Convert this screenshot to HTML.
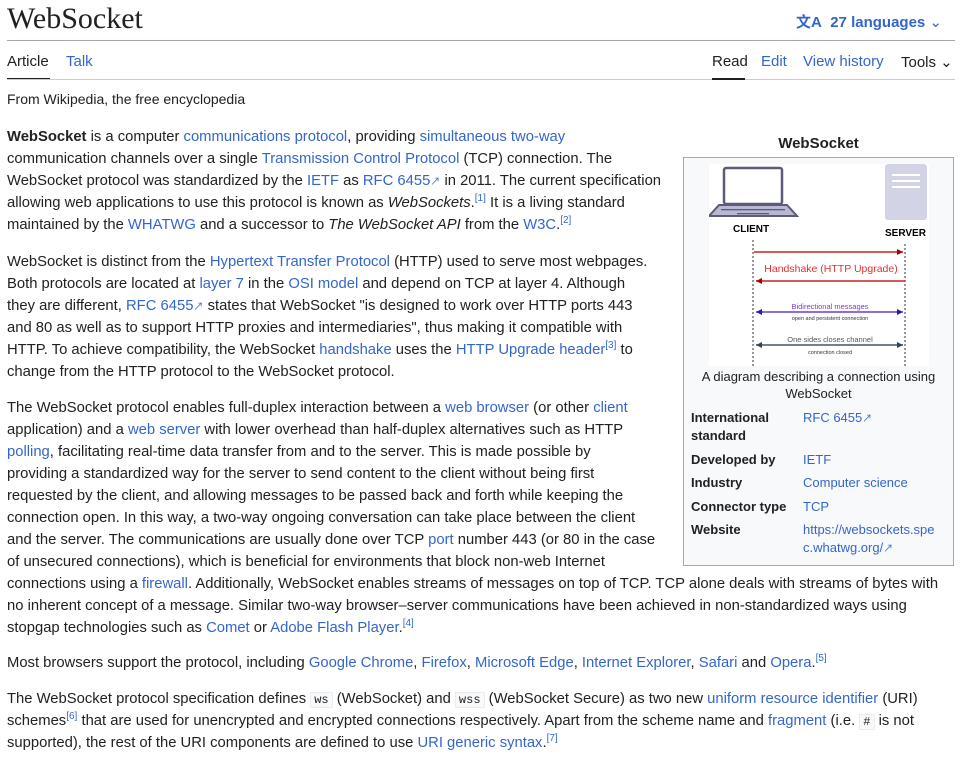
<!DOCTYPE html>
<html><head><meta charset="utf-8"><style>
body{margin:0;width:964px;height:769px;overflow:hidden;background:#fff;font-family:"Liberation Sans","Noto Sans CJK SC",sans-serif;color:#202122;font-size:14px}
a{color:#3366cc;text-decoration:none}
.l{position:absolute;left:7px;white-space:nowrap;line-height:22px;height:22px;font-size:14.8px}
sup{font-size:10px;line-height:0}
code{font-family:"Liberation Mono",monospace;background:#f8f9fa;border:1px solid #eaecf0;padding:0 3px;font-size:12px}
.ib{position:absolute;left:683px;top:157px;width:271px;height:409px;border:1px solid #a2a9b1;background:#f8f9fa;box-sizing:border-box}
.ir{position:absolute;font-size:13px;line-height:18px;white-space:nowrap}
.ext{font-size:10px}
</style></head><body>
<div style="position:absolute;left:7px;top:1px;font-family:'Liberation Serif',serif;font-size:30px;line-height:36px">WebSocket</div>
<div style="position:absolute;right:22px;top:11px;color:#3366cc;font-weight:bold;font-size:15px">文A&nbsp; 27 languages <span style="font-weight:normal">⌄</span></div>
<div style="position:absolute;left:7px;top:40px;width:948px;height:1px;background:#a2a9b1"></div>
<div style="position:absolute;left:7px;top:53px;font-size:15px">Article</div>
<div style="position:absolute;left:66px;top:53px;font-size:15px;color:#3366cc">Talk</div>
<div style="position:absolute;left:7px;top:78px;width:43px;height:2px;background:#202122"></div>
<div style="position:absolute;left:7px;top:79px;width:948px;height:1px;background:#c8ccd1"></div>
<div style="position:absolute;left:712px;top:53px;font-size:15px">Read</div>
<div style="position:absolute;left:712px;top:78px;width:33px;height:2px;background:#202122"></div>
<div style="position:absolute;left:761px;top:53px;color:#3366cc;font-size:15px">Edit</div>
<div style="position:absolute;left:803px;top:53px;color:#3366cc;font-size:15px">View history</div>
<div style="position:absolute;left:901px;top:53px;font-size:15px">Tools ⌄</div>
<div style="position:absolute;left:7px;top:91px;font-size:14px">From Wikipedia, the free encyclopedia</div>

<div class="l" style="top:126px"><b>WebSocket</b> is a computer <a>communications protocol</a>, providing <a>simultaneous two-way</a></div>
<div class="l" style="top:148px">communication channels over a single <a>Transmission Control Protocol</a> (TCP) connection. The</div>
<div class="l" style="top:170px">WebSocket protocol was standardized by the <a>IETF</a> as <a>RFC 6455<span class="ext">↗</span></a> in 2011. The current specification</div>
<div class="l" style="top:192px">allowing web applications to use this protocol is known as <i>WebSockets</i>.<sup><a>[1]</a></sup> It is a living standard</div>
<div class="l" style="top:214px">maintained by the <a>WHATWG</a> and a successor to <i>The WebSocket API</i> from the <a>W3C</a>.<sup><a>[2]</a></sup></div>

<div class="l" style="top:251px">WebSocket is distinct from the <a>Hypertext Transfer Protocol</a> (HTTP) used to serve most webpages.</div>
<div class="l" style="top:273px">Both protocols are located at <a>layer 7</a> in the <a>OSI model</a> and depend on TCP at layer 4. Although</div>
<div class="l" style="top:295px">they are different, <a>RFC 6455<span class="ext">↗</span></a> states that WebSocket "is designed to work over HTTP ports 443</div>
<div class="l" style="top:317px">and 80 as well as to support HTTP proxies and intermediaries", thus making it compatible with</div>
<div class="l" style="top:339px">HTTP. To achieve compatibility, the WebSocket <a>handshake</a> uses the <a>HTTP Upgrade header</a><sup><a>[3]</a></sup> to</div>
<div class="l" style="top:361px">change from the HTTP protocol to the WebSocket protocol.</div>

<div class="l" style="top:397px">The WebSocket protocol enables full-duplex interaction between a <a>web browser</a> (or other <a>client</a></div>
<div class="l" style="top:419px">application) and a <a>web server</a> with lower overhead than half-duplex alternatives such as HTTP</div>
<div class="l" style="top:441px"><a>polling</a>, facilitating real-time data transfer from and to the server. This is made possible by</div>
<div class="l" style="top:463px">providing a standardized way for the server to send content to the client without being first</div>
<div class="l" style="top:485px">requested by the client, and allowing messages to be passed back and forth while keeping the</div>
<div class="l" style="top:507px">connection open. In this way, a two-way ongoing conversation can take place between the client</div>
<div class="l" style="top:529px">and the server. The communications are usually done over TCP <a>port</a> number 443 (or 80 in the case</div>
<div class="l" style="top:551px">of unsecured connections), which is beneficial for environments that block non-web Internet</div>
<div class="l" style="top:573px">connections using a <a>firewall</a>. Additionally, WebSocket enables streams of messages on top of TCP. TCP alone deals with streams of bytes with</div>
<div class="l" style="top:595px">no inherent concept of a message. Similar two-way browser–server communications have been achieved in non-standardized ways using</div>
<div class="l" style="top:617px">stopgap technologies such as <a>Comet</a> or <a>Adobe Flash Player</a>.<sup><a>[4]</a></sup></div>

<div class="l" style="top:652px">Most browsers support the protocol, including <a>Google Chrome</a>, <a>Firefox</a>, <a>Microsoft Edge</a>, <a>Internet Explorer</a>, <a>Safari</a> and <a>Opera</a>.<sup><a>[5]</a></sup></div>

<div class="l" style="top:688px">The WebSocket protocol specification defines <code>ws</code> (WebSocket) and <code>wss</code> (WebSocket Secure) as two new <a>uniform resource identifier</a> (URI)</div>
<div class="l" style="top:710px">schemes<sup><a>[6]</a></sup> that are used for unencrypted and encrypted connections respectively. Apart from the scheme name and <a>fragment</a> (i.e. <code>#</code> is not</div>
<div class="l" style="top:732px">supported), the rest of the URI components are defined to use <a>URI generic syntax</a>.<sup><a>[7]</a></sup></div>

<div style="position:absolute;left:683px;top:135px;width:271px;text-align:center;font-weight:bold;font-size:15px">WebSocket</div>
<div class="ib"></div>
<svg style="position:absolute;left:709px;top:164px" width="220" height="202" viewBox="0 0 220 202">
<rect width="220" height="202" fill="#fff"/>
<rect x="15" y="4" width="58" height="36" rx="2" fill="#fff" stroke="#5d5a78" stroke-width="2.5"/>
<path d="M0 52 L10 41 L78 41 L88 52 Z" fill="#b9b8d4" stroke="#5d5a78" stroke-width="2"/>
<rect x="12" y="45" width="64" height="1.3" fill="#5d5a78"/><rect x="28" y="49" width="32" height="1.3" fill="#5d5a78"/>
<rect x="176" y="0" width="42" height="56" rx="3" fill="#d3d3e6"/>
<rect x="183" y="10" width="28" height="2" fill="#fff"/><rect x="183" y="16" width="28" height="2" fill="#fff"/><rect x="183" y="22" width="28" height="2" fill="#fff"/>
<text x="24" y="68" font-family="Liberation Sans" font-weight="bold" font-size="10">CLIENT</text>
<text x="176" y="72" font-family="Liberation Sans" font-weight="bold" font-size="10">SERVER</text>
<line x1="44" y1="76" x2="44" y2="202" stroke="#333" stroke-dasharray="2,2"/>
<line x1="196" y1="80" x2="196" y2="202" stroke="#333" stroke-dasharray="2,2"/>
<path d="M45 88 H194" stroke="#c22" stroke-width="1.5"/><path d="M194 88 l-6 -3 v6z" fill="#a00"/>
<text x="122" y="108" text-anchor="middle" font-family="Liberation Sans" font-size="10.5" fill="#d33">Handshake (HTTP Upgrade)</text>
<path d="M47 117 H196" stroke="#c22" stroke-width="1.5"/><path d="M47 117 l6 -3 v6z" fill="#a00"/>
<text x="121" y="145" text-anchor="middle" font-family="Liberation Sans" font-size="7.5" fill="#7a3fc2">Bidirectional messages</text>
<path d="M47 148 H194" stroke="#6a3fd1" stroke-width="1.5"/><path d="M194 148 l-6 -3 v6z M47 148 l6 -3 v6z" fill="#2a1aa8"/>
<text x="121" y="156" text-anchor="middle" font-family="Liberation Sans" font-size="5.5" fill="#333">open and persistent connection</text>
<text x="121" y="178" text-anchor="middle" font-family="Liberation Sans" font-size="7.5" fill="#555">One sides closes channel</text>
<path d="M47 181 H194" stroke="#456" stroke-width="1.5"/><path d="M194 181 l-6 -3 v6z M47 181 l6 -3 v6z" fill="#345"/>
<text x="121" y="190" text-anchor="middle" font-family="Liberation Sans" font-size="5.5" fill="#333">connection closed</text>
</svg>
<div style="position:absolute;left:684px;top:368px;width:269px;text-align:center;font-size:13px;line-height:17px">A diagram describing a connection using WebSocket</div>
<div class="ir" style="left:691px;top:409px;font-weight:bold">International<br>standard</div>
<div class="ir" style="left:803px;top:409px"><a>RFC 6455<span class="ext">↗</span></a></div>
<div class="ir" style="left:691px;top:451px;font-weight:bold">Developed by</div>
<div class="ir" style="left:803px;top:451px"><a>IETF</a></div>
<div class="ir" style="left:691px;top:474px;font-weight:bold">Industry</div>
<div class="ir" style="left:803px;top:474px"><a>Computer science</a></div>
<div class="ir" style="left:691px;top:498px;font-weight:bold">Connector type</div>
<div class="ir" style="left:803px;top:498px"><a>TCP</a></div>
<div class="ir" style="left:691px;top:521px;font-weight:bold">Website</div>
<div class="ir" style="left:803px;top:521px"><a>https://websockets.spe<br>c.whatwg.org/<span class="ext">↗</span></a></div>
</body></html>
